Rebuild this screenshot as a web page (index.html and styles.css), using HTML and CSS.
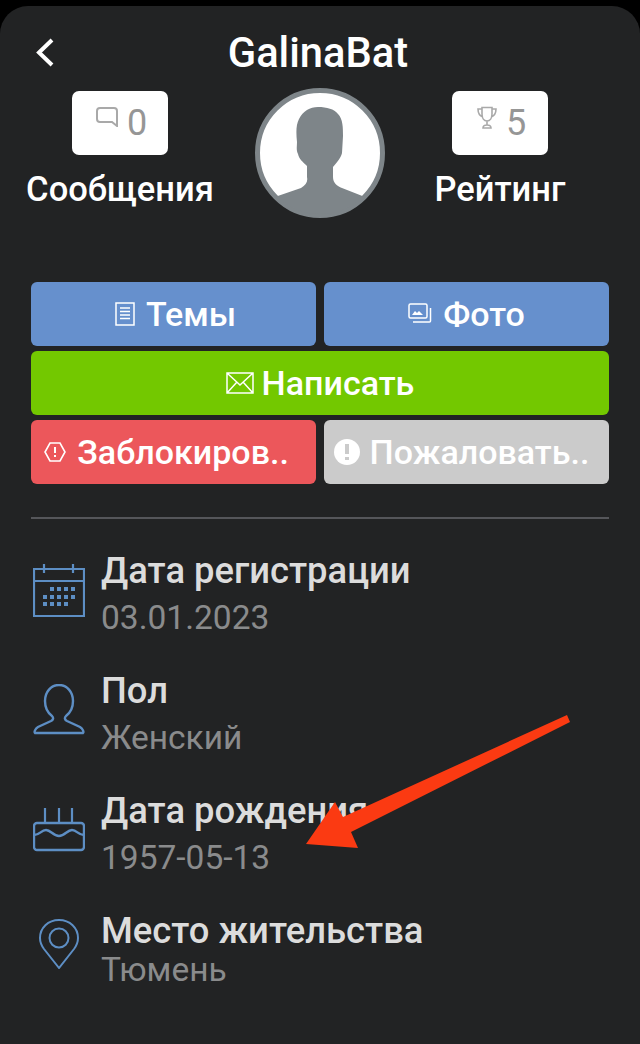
FILE: index.html
```html
<!DOCTYPE html>
<html lang="ru">
<head>
<meta charset="utf-8">
<title>GalinaBat</title>
<link rel="stylesheet" href="styles.css">
</head>
<body>
<main class="panel">
  <header class="topbar">
    <svg class="back" viewBox="0 0 24 32" width="24" height="32"><path d="M19 4 6 16.500 19 29" fill="none" stroke="#fff" stroke-width="4"/></svg>
    <h1 class="title">GalinaBat</h1>
  </header>
  <section class="profile">
    <div class="stat">
      <div class="stat-box">
        <svg viewBox="0 0 22 20" width="22" height="20"><path d="M4 1h14a3 3 0 0 1 3 3v15l-5-4H4a3 3 0 0 1-3-3V4a3 3 0 0 1 3-3z" fill="none" stroke="#a9a9a9" stroke-width="2"/></svg>
        <span>0</span>
      </div>
      <div class="stat-label">Сообщения</div>
    </div>
    <div class="avatar">
      <svg viewBox="0 0 130 130" width="130" height="130">
        <circle cx="65" cy="65" r="62.500" fill="#fff" stroke="#7e8589" stroke-width="5"/>
        <path d="M22 108.300 46 100C51 97 53 94 52 89V78C48 74 44 71 43 66 41 62 42 58 42 54 41 44 41 37 44 31 48 23 55 19 63 19 72 19 79 21 83 26 88 31 88 40 88 48L87 65C86 70 82 74 78 79V89C78 95 82 98 87 100L108 108.300A61 61 0 0 1 22 108.300Z" fill="#7e8589"/>
      </svg>
    </div>
    <div class="stat">
      <div class="stat-box">
        <svg viewBox="0 0 20 23" width="20" height="23"><path d="M5 1.500h10V8c0 4-2 7-5 7S5 12 5 8V1.500zM5 3H1c0 4 2 7 5 8M15 3h4c0 4-2 7-5 8M10 15v4M6 22c0-2 2-3 4-3s4 1 4 3H6z" fill="none" stroke="#a9a9a9" stroke-width="1.600"/></svg>
        <span>5</span>
      </div>
      <div class="stat-label">Рейтинг</div>
    </div>
  </section>
  <section class="actions">
    <button class="btn btn-blue btn-themes">
      <svg viewBox="0 0 20 24" width="20" height="24"><path d="M1 1h18v22H1zM5 6h10M5 9.500h10M5 13h10M5 16.500h10" fill="none" stroke="#fff" stroke-width="1.500"/></svg>
      Темы
    </button>
    <button class="btn btn-blue">
      <svg viewBox="0 0 24 22" width="24" height="22"><rect x="1" y="1" width="18" height="14" rx="1.500" fill="none" stroke="#fff" stroke-width="1.500"/><path d="M22.500 5v13a1 1 0 0 1-1 1H5" fill="none" stroke="#fff" stroke-width="1.500"/><path d="M4 12l3-4 2 2 2-2 4 4z" fill="#fff"/></svg>
      Фото
    </button>
    <button class="btn btn-green btn-wide">
      <svg viewBox="0 0 28 22" width="28" height="22"><path d="M1 1h26v20H1zM1 1l13 12L27 1M1 21l10-11M27 21 17 10" fill="none" stroke="#fff" stroke-width="1.500"/></svg>
      Написать
    </button>
    <button class="btn btn-red">
      <svg viewBox="0 0 22 20" width="22" height="20"><path d="M6 1h10l5 9-5 9H6l-5-9z" fill="none" stroke="#fff" stroke-width="1.600"/><path d="M11 5v6M11 13v2" stroke="#fff" stroke-width="2" fill="none"/></svg>
      Заблокиров..
    </button>
    <button class="btn btn-grey">
      <svg viewBox="0 0 26 26" width="26" height="26"><circle cx="13" cy="13" r="13" fill="#fff"/><path d="M13 5v10M13 18v3" stroke="#cbcbcb" stroke-width="4" fill="none"/></svg>
      Пожаловать..
    </button>
  </section>
  <hr class="divider">
  <section class="details">
    <div class="row">
      <svg class="row-icon" viewBox="0 0 52 53" width="52" height="53"><path d="M1 5h50v47H1zM1 17h50M11 0v9M40 0v9" fill="none" stroke="#5d8ec4" stroke-width="2.200"/><path d="M17 23h4v4h-4zM24 23h4v4h-4zM31 23h4v4h-4zM38 23h4v4h-4zM10 31h4v4h-4zM17 31h4v4h-4zM24 31h4v4h-4zM31 31h4v4h-4zM38 31h4v4h-4zM10 38h4v4h-4zM17 38h4v4h-4zM24 38h4v4h-4zM31 38h4v4h-4z" fill="#5d8ec4"/></svg>
      <div class="row-text"><div class="row-title">Дата регистрации</div><div class="row-value">03.01.2023</div></div>
    </div>
    <div class="row">
      <svg class="row-icon" viewBox="0 0 52 52" width="52" height="52"><path d="M26 1c8 0 14 7 14 16 0 7-3 12-7 15-2 2-1 4 1 5l13 6c3 2 4 5 3 6H2c-1-1 0-4 3-6l13-6c2-1 3-3 1-5-4-3-7-8-7-15 0-9 6-16 14-16z" fill="none" stroke="#5d8ec4" stroke-width="2.400"/></svg>
      <div class="row-text"><div class="row-title">Пол</div><div class="row-value">Женский</div></div>
    </div>
    <div class="row">
      <svg class="row-icon" viewBox="0 0 52 52" width="52" height="52"><path d="M12 4v14M26 4v14M39 4v14" stroke="#5d8ec4" stroke-width="2.200" fill="none"/><path d="M4 19h44a3 3 0 0 1 3 3v21a3 3 0 0 1-3 3H4a3 3 0 0 1-3-3V22a3 3 0 0 1 3-3z" fill="none" stroke="#5d8ec4" stroke-width="2.400"/><path d="M1 31c6 0 7-5 12-5s7 6 13 6 8-6 13-6 6 5 12 5" fill="none" stroke="#5d8ec4" stroke-width="2.400"/></svg>
      <div class="row-text"><div class="row-title">Дата рождения</div><div class="row-value">1957-05-13</div></div>
    </div>
    <div class="row row-last">
      <svg class="row-icon" viewBox="0 0 52 50" width="52" height="50"><path d="M26 49 11 30C8 26 7 22 7 19 7 9 15 1 26 1s19 8 19 18c0 3-1 7-4 11z" fill="none" stroke="#5d8ec4" stroke-width="2"/><circle cx="26" cy="19" r="9.500" fill="none" stroke="#5d8ec4" stroke-width="2"/></svg>
      <div class="row-text"><div class="row-title">Место жительства</div><div class="row-value">Тюмень</div></div>
    </div>
  </section>
  <svg class="arrow" viewBox="0 0 640 1044" width="640" height="1044"><path d="M567 715 570 722 351 832 358 848 306 844 335 802 343 817z" fill="#fb3a12"/></svg>
</main>
</body>
</html>
```
FILE: styles.css
```css
* { box-sizing: border-box; }
html, body { margin: 0; height: 100%; }
body {
  background: #000;
  padding-top: 6px;
  font-family: Roboto, "Noto Sans", sans-serif;
  overflow: hidden;
}
.panel {
  position: relative;
  height: 1038px;
  background: #222324;
  border-radius: 28px 28px 0 0;
  padding: 0 31px;
}
.topbar {
  height: 82px;
  display: flex;
  justify-content: center;
  align-items: flex-start;
  margin: 0 -31px;
  padding-right: 4px;
}
.back { position: absolute; left: 33px; top: 30px; }
.title {
  margin: 22px 0 0;
  font-size: 41.700px;
  line-height: 50px;
  font-weight: 500;
  color: #fff;
}
.profile {
  display: grid;
  grid-template-columns: 218px 130px 178px;
  column-gap: 26px;
  margin-left: -20px;
  height: 194px;
}
.stat { display: flex; flex-direction: column; align-items: center; padding-top: 3px; }
.stat-box {
  width: 96px;
  height: 64px;
  background: #fff;
  border-radius: 7px;
  display: flex;
  align-items: center;
  justify-content: center;
  gap: 9px;
  color: #969696;
  font-size: 36px;
  padding-left: 3px;
}
.stat-box svg { margin-top: -12px; }
.stat-label {
  margin-top: 14px;
  font-size: 34.500px;
  line-height: 40px;
  font-weight: 500;
  color: #fff;
  white-space: nowrap;
}
.avatar { height: 130px; }
.avatar svg { display: block; }
.actions {
  display: grid;
  grid-template-columns: 285px 285px;
  grid-auto-rows: 64px;
  gap: 5px 8px;
}
.btn {
  border: 0;
  border-radius: 6px;
  font: 500 34px/1 Roboto, "Noto Sans", sans-serif;
  color: #fff;
  display: flex;
  align-items: center;
  justify-content: center;
  gap: 11px;
  white-space: nowrap;
  padding: 0;
}
.btn-themes { padding-left: 4px; }
.btn-wide { grid-column: 1 / -1; gap: 8px; }
.btn-blue { background: #6690cd; }
.btn-green { background: #73c800; }
.btn-red { background: #ec575b; padding-right: 14px; }
.btn-grey { background: #cbcbcb; padding-right: 10px; gap: 10px; }
.divider {
  border: 0;
  height: 2px;
  margin: 33px 0 0;
  background: #55565a;
}
.details { display: flex; flex-direction: column; padding-top: 28px; }
.row { display: flex; align-items: flex-start; height: 120px; }
.row-icon { margin: 17px 16px 0 2px; flex: none; }
.row-title {
  font-size: 36.400px;
  line-height: 48px;
  font-weight: 500;
  color: #dcdcdc;
}
.row-value {
  font-size: 33.500px;
  line-height: 46px;
  color: #8a8b8c;
}
.row-last .row-value { line-height: 30px; }
.row-last .row-icon { margin-top: 12px; }
.arrow { position: absolute; left: 0; top: -6px; pointer-events: none; }
```
